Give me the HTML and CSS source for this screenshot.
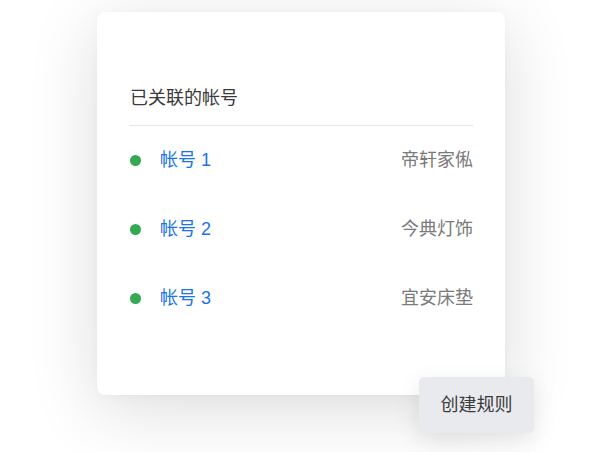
FILE: index.html
```html
<!DOCTYPE html>
<html lang="zh-CN">
<head>
<meta charset="utf-8">
<title>已关联的帐号</title>
<link rel="stylesheet" href="styles.css">
</head>
<body>
<div class="stage">
  <section class="card">
    <h2 class="title">已关联的帐号</h2>
    <ul class="list">
      <li class="row"><span class="dot"></span><span class="name">帐号 1</span><span class="shop">帝轩家俬</span></li>
      <li class="row"><span class="dot"></span><span class="name">帐号 2</span><span class="shop">今典灯饰</span></li>
      <li class="row"><span class="dot"></span><span class="name">帐号 3</span><span class="shop">宜安床垫</span></li>
    </ul>
  </section>
  <button class="fab">创建规则</button>
</div>
</body>
</html>
```
FILE: styles.css
```css
html, body {
  margin: 0;
  padding: 0;
  background: #ffffff;
}
body {
  font-family: "Liberation Sans", "Noto Sans CJK SC", sans-serif;
  width: 598px;
  height: 452px;
  overflow: hidden;
}
.stage {
  position: relative;
  width: 598px;
  height: 452px;
  padding: 12px 0 0 97px;
  box-sizing: border-box;
}
.card {
  width: 408px;
  height: 383px;
  box-sizing: border-box;
  background: #ffffff;
  border-radius: 8px;
  box-shadow: 0 14px 70px rgba(0, 0, 0, 0.14), 0 2px 8px rgba(0, 0, 0, 0.03);
  padding: 73px 32px 0 32px;
}
.title {
  margin: 0 0 14px 0;
  padding: 0 0 0 1px;
  font-size: 18px;
  font-weight: 400;
  line-height: 26px;
  color: #3a3a3a;
}
.list {
  list-style: none;
  margin: 0;
  padding: 0;
  border-top: 1px solid #e6e6e6;
}
.row {
  display: flex;
  align-items: center;
  height: 69px;
  font-size: 18px;
  line-height: 26px;
}
.row > .name, .row > .shop {
  position: relative;
  top: -1px;
}
.dot {
  width: 11px;
  height: 11px;
  border-radius: 50%;
  background: #34a853;
  margin: 0 19px 0 1px;
  flex: none;
}
.name {
  color: #1a73e8;
  flex: 1;
}
.shop {
  color: #7a7a7a;
}
.fab {
  position: absolute;
  left: 419px;
  top: 377px;
  width: 115px;
  height: 56px;
  border: none;
  border-radius: 5px;
  background: #e9eaee;
  color: #3a3a3a;
  font-family: "Liberation Sans", "Noto Sans CJK SC", sans-serif;
  font-size: 18px;
  line-height: 26px;
  padding: 0;
  box-shadow: 0 8px 24px rgba(0, 0, 0, 0.1);
}
```
